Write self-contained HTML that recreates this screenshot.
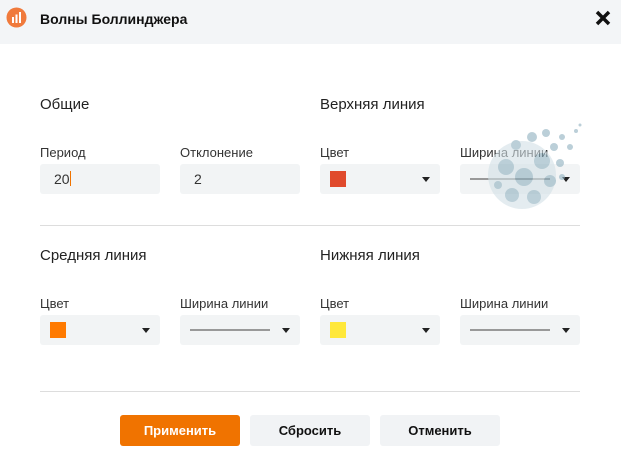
<!DOCTYPE html>
<html><head><meta charset="utf-8"><style>
*{margin:0;padding:0;box-sizing:border-box}
body{width:621px;height:464px;background:#fff;font-family:"Liberation Sans",sans-serif;position:relative;overflow:hidden;color:#222}
.hdr{position:absolute;left:0;top:0;width:621px;height:44px;background:#f3f5f7}
.t{position:absolute;font-size:14px;font-weight:bold;color:#111;left:40px;top:10px}
.h{position:absolute;font-size:15px;color:#222}
.l{position:absolute;font-size:13px;color:#333}
.in{position:absolute;width:120px;height:30px;background:#f2f4f5;border-radius:3px}
.v{position:absolute;left:20px;top:7px;font-size:14px;color:#333}
.sw{position:absolute;left:10px;top:7px;width:16px;height:16px}
.ar{position:absolute;right:10px;top:13px;width:0;height:0;border-left:4px solid transparent;border-right:4px solid transparent;border-top:5px solid #222}
.ln{position:absolute;left:10px;top:14px;width:80px;height:2px;background:#999}
.hr{position:absolute;left:40px;width:540px;height:1px;background:#ddd}
.b{position:absolute;top:415px;width:120px;height:31px;border-radius:3px;background:#f1f3f5;font-size:13px;font-weight:bold;text-align:center;line-height:31px;color:#111}
</style></head><body>
<div class="hdr"></div>
<svg style="position:absolute;left:6px;top:7px" width="21" height="21"><circle cx="10.5" cy="10.5" r="10" fill="#f07a3c"/><rect x="6" y="10" width="2" height="6" fill="#fff"/><rect x="9.5" y="7.5" width="2" height="8.5" fill="#fff"/><rect x="13" y="5" width="2" height="11" fill="#fff"/></svg>
<div class="t" style="top:11px">Волны Боллинджера</div>
<svg style="position:absolute;left:595px;top:10px" width="16" height="16"><path d="M2 2L14 14M14 2L2 14" stroke="#111" stroke-width="3.5"/></svg>

<div class="h" style="left:40px;top:96px">Общие</div>
<div class="h" style="left:320px;top:96px">Верхняя линия</div>
<div class="l" style="left:40px;top:145px">Период</div>
<div class="l" style="left:180px;top:145px">Отклонение</div>
<div class="l" style="left:320px;top:145px">Цвет</div>
<div class="l" style="left:460px;top:145px">Ширина линии</div>
<div class="in" style="left:40px;top:164px"><span class="v" style="left:14px">20<span style="display:inline-block;width:1px;height:15px;background:#f07300;vertical-align:-2px"></span></span></div>
<div class="in" style="left:180px;top:164px"><span class="v" style="left:14px">2</span></div>
<div class="in" style="left:320px;top:164px"><div class="sw" style="background:#e04a2c"></div><div class="ar"></div></div>
<div class="in" style="left:460px;top:164px"><div class="ln"></div><div class="ar"></div></div>
<svg style="position:absolute;left:484px;top:115px;opacity:.6" width="105" height="100"><g fill="#8fb0bf"><circle cx="38" cy="60" r="34" fill="#d3e1e7"/><circle cx="22" cy="52" r="8"/><circle cx="40" cy="62" r="9"/><circle cx="58" cy="46" r="8"/><circle cx="28" cy="80" r="7"/><circle cx="50" cy="82" r="7"/><circle cx="66" cy="66" r="6"/><circle cx="70" cy="32" r="4"/><circle cx="78" cy="22" r="3"/><circle cx="76" cy="48" r="4"/><circle cx="86" cy="32" r="3"/><circle cx="92" cy="16" r="2"/><circle cx="96" cy="10" r="1.5"/><circle cx="62" cy="18" r="4"/><circle cx="48" cy="22" r="5"/><circle cx="32" cy="30" r="5"/><circle cx="78" cy="62" r="3"/><circle cx="14" cy="70" r="4"/></g></svg>

<div class="hr" style="top:225px"></div>
<div class="h" style="left:40px;top:247px">Средняя линия</div>
<div class="h" style="left:320px;top:247px">Нижняя линия</div>
<div class="l" style="left:40px;top:296px">Цвет</div>
<div class="l" style="left:180px;top:296px">Ширина линии</div>
<div class="l" style="left:320px;top:296px">Цвет</div>
<div class="l" style="left:460px;top:296px">Ширина линии</div>
<div class="in" style="left:40px;top:315px"><div class="sw" style="background:#ff7a00"></div><div class="ar"></div></div>
<div class="in" style="left:180px;top:315px"><div class="ln"></div><div class="ar"></div></div>
<div class="in" style="left:320px;top:315px"><div class="sw" style="background:#ffe83a"></div><div class="ar"></div></div>
<div class="in" style="left:460px;top:315px"><div class="ln"></div><div class="ar"></div></div>
<div class="hr" style="top:391px"></div>
<div class="b" style="left:120px;background:#f07300;color:#fff">Применить</div>
<div class="b" style="left:250px">Сбросить</div>
<div class="b" style="left:380px">Отменить</div>
</body></html>
